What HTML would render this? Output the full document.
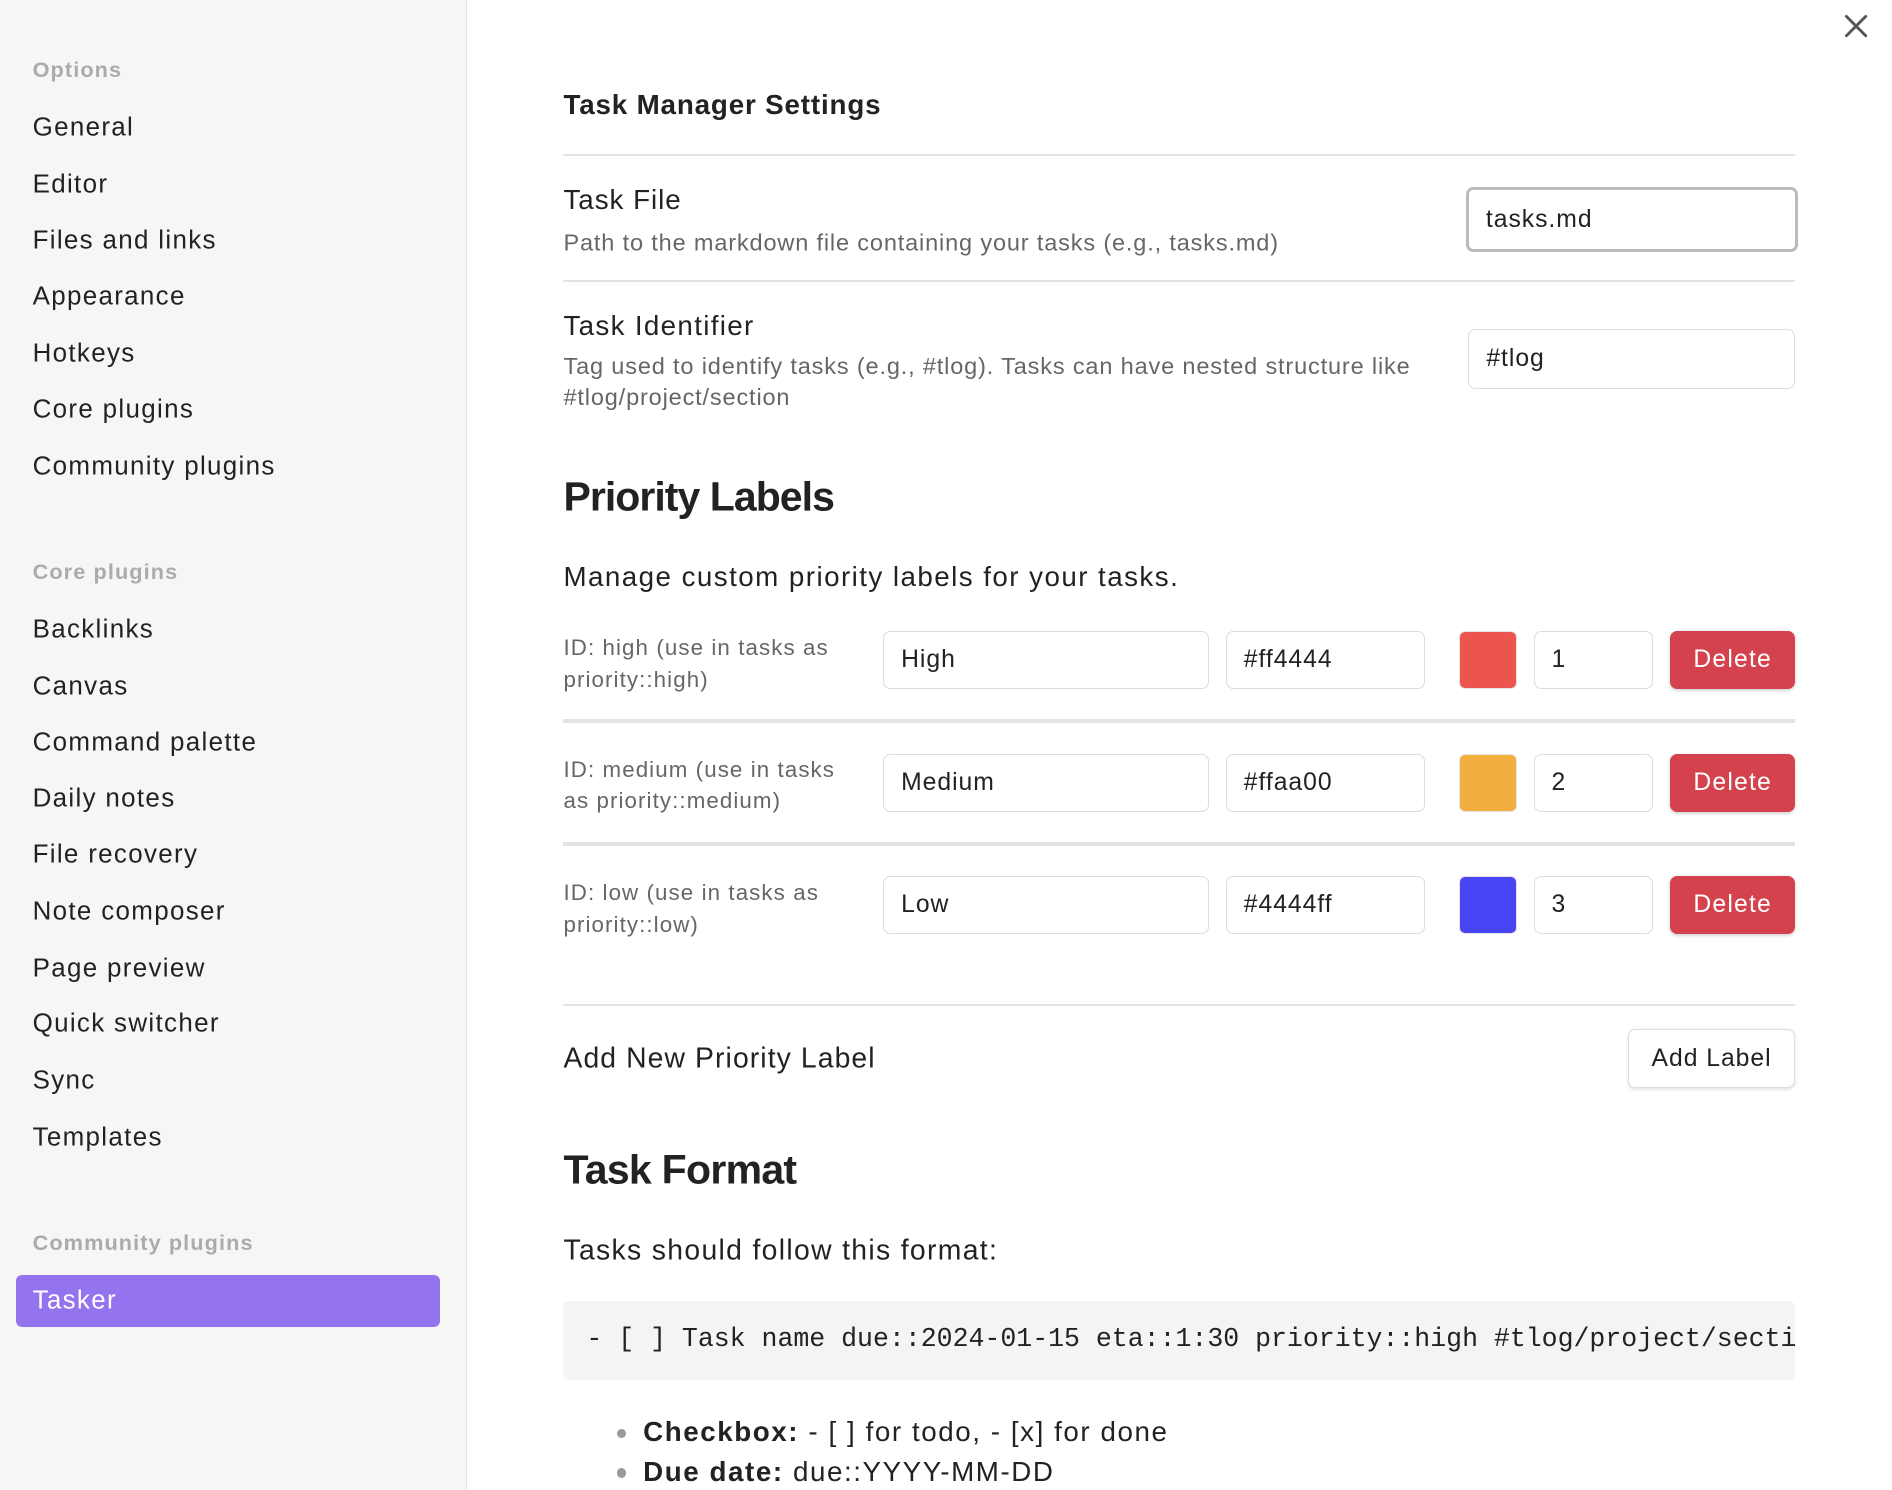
<!DOCTYPE html>
<html><head><meta charset="utf-8"><style>
html,body{margin:0;padding:0;background:#fff;overflow:hidden}
body{width:1568px;height:1235px;zoom:1.2066;position:relative;font-family:"Liberation Sans",sans-serif;color:#222}
.a{position:absolute;white-space:nowrap}
#side{position:absolute;left:0;top:0;width:386px;height:1235px;background:#f6f6f6;border-right:1px solid #e3e3e3}
.h{position:absolute;left:27px;font-size:18px;letter-spacing:0.9px;font-weight:bold;color:#ababab;transform:translateY(-50%)}
.it{position:absolute;left:27px;font-size:21.5px;letter-spacing:1.1px;color:#222;transform:translateY(-50%)}
.c{transform:translateY(-50%)}
.inp{position:absolute;border:1.5px solid #ddd;border-radius:6px;background:#fff;box-sizing:border-box;font-size:20.5px;letter-spacing:0.8px;padding-left:14px;display:flex;align-items:center}
.del{position:absolute;background:#d4424e;border-radius:6px;color:#fff;font-size:20.5px;letter-spacing:1px;display:flex;align-items:center;justify-content:center;box-shadow:0 1px 3px rgba(0,0,0,.2)}
.sw{position:absolute;border-radius:5px;border:1.5px solid #e4e4e4;box-sizing:border-box}
.line{position:absolute;left:467px;width:1021px;background:#e3e3e3}
.idt{position:absolute;left:467px;font-size:18.5px;letter-spacing:0.9px;color:#666;line-height:26px}
</style></head><body>
<div id="side">
<div class="h" style="top:58px">Options</div>
<div class="it" style="top:106px">General</div>
<div class="it" style="top:153px">Editor</div>
<div class="it" style="top:200px">Files and links</div>
<div class="it" style="top:246px">Appearance</div>
<div class="it" style="top:293px">Hotkeys</div>
<div class="it" style="top:340px">Core plugins</div>
<div class="it" style="top:387px">Community plugins</div>
<div class="h" style="top:474px">Core plugins</div>
<div class="it" style="top:522px">Backlinks</div>
<div class="it" style="top:569px">Canvas</div>
<div class="it" style="top:616px">Command palette</div>
<div class="it" style="top:662px">Daily notes</div>
<div class="it" style="top:709px">File recovery</div>
<div class="it" style="top:756px">Note composer</div>
<div class="it" style="top:803px">Page preview</div>
<div class="it" style="top:849px">Quick switcher</div>
<div class="it" style="top:896px">Sync</div>
<div class="it" style="top:943px">Templates</div>
<div class="h" style="top:1030px">Community plugins</div>
<div style="position:absolute;left:13px;top:1057px;width:352px;height:43px;background:#9373ee;border-radius:5px"></div>
<div class="it" style="top:1078px;color:#fff">Tasker</div>
</div>
<svg class="a" style="left:1528px;top:12px" width="20" height="20" viewBox="0 0 20 20"><path d="M2 2L18 18M18 2L2 18" stroke="#555" stroke-width="2.4" stroke-linecap="round"/></svg>

<div class="a c" style="left:467px;top:87px;font-size:23px;letter-spacing:0.7px;font-weight:bold">Task Manager Settings</div>
<div class="line" style="top:128px;height:1.5px"></div>
<div class="a c" style="left:467px;top:166px;font-size:23px;letter-spacing:0.8px">Task File</div>
<div class="a c" style="left:467px;top:201px;font-size:19.5px;letter-spacing:0.7px;color:#666">Path to the markdown file containing your tasks (e.g., tasks.md)</div>
<div class="inp" style="left:1215px;top:155px;width:275px;height:54px;border:3px solid #bbb;padding-left:14px">tasks.md</div>
<div class="line" style="top:232px;height:1.5px"></div>
<div class="a c" style="left:467px;top:270px;font-size:23px;letter-spacing:1.1px">Task Identifier</div>
<div class="idt" style="top:291px;font-size:19.5px;letter-spacing:0.7px">Tag used to identify tasks (e.g., #tlog). Tasks can have nested structure like<br>#tlog/project/section</div>
<div class="inp" style="left:1217px;top:273px;width:271px;height:49px">#tlog</div>

<div class="a c" style="left:467px;top:412px;font-size:34px;font-weight:bold;letter-spacing:-0.8px">Priority Labels</div>
<div class="a c" style="left:467px;top:478px;font-size:23px;letter-spacing:1.2px">Manage custom priority labels for your tasks.</div>

<div class="idt" style="top:524px">ID: high (use in tasks as<br>priority::high)</div>
<div class="inp" style="left:732px;top:523px;width:270px;height:48px">High</div>
<div class="inp" style="left:1016px;top:523px;width:165px;height:48px">#ff4444</div>
<div class="sw" style="left:1209px;top:523px;width:48px;height:48px;background:#ec544e"></div>
<div class="inp" style="left:1271px;top:523px;width:99px;height:48px">1</div>
<div class="del" style="left:1384px;top:523px;width:104px;height:48px">Delete</div>
<div class="line" style="top:596px;height:3px"></div>

<div class="idt" style="top:625px">ID: medium (use in tasks<br>as priority::medium)</div>
<div class="inp" style="left:732px;top:625px;width:270px;height:48px">Medium</div>
<div class="inp" style="left:1016px;top:625px;width:165px;height:48px">#ffaa00</div>
<div class="sw" style="left:1209px;top:625px;width:48px;height:48px;background:#f3ae40"></div>
<div class="inp" style="left:1271px;top:625px;width:99px;height:48px">2</div>
<div class="del" style="left:1384px;top:625px;width:104px;height:48px">Delete</div>
<div class="line" style="top:698px;height:3px"></div>

<div class="idt" style="top:727px">ID: low (use in tasks as<br>priority::low)</div>
<div class="inp" style="left:732px;top:726px;width:270px;height:48px">Low</div>
<div class="inp" style="left:1016px;top:726px;width:165px;height:48px">#4444ff</div>
<div class="sw" style="left:1209px;top:726px;width:48px;height:48px;background:#4644f3"></div>
<div class="inp" style="left:1271px;top:726px;width:99px;height:48px">3</div>
<div class="del" style="left:1384px;top:726px;width:104px;height:48px">Delete</div>

<div class="line" style="top:832px;height:1.5px"></div>
<div class="a c" style="left:467px;top:878px;font-size:23.5px;letter-spacing:0.9px">Add New Priority Label</div>
<div class="inp" style="left:1349px;top:853px;width:139px;height:49px;justify-content:center;padding:0;box-shadow:0 1px 3px rgba(0,0,0,.12)">Add Label</div>

<div class="a c" style="left:467px;top:970px;font-size:34px;font-weight:bold;letter-spacing:-0.6px">Task Format</div>
<div class="a c" style="left:467px;top:1037px;font-size:23.5px;letter-spacing:1.1px">Tasks should follow this format:</div>
<div style="position:absolute;left:467px;top:1078px;width:1021px;height:66px;background:#f4f4f4;border-radius:5px;overflow:hidden">
<div class="a" style="left:19px;top:19px;font-family:'Liberation Mono',monospace;font-size:22px;color:#222">- [ ] Task name due::2024-01-15 eta::1:30 priority::high #tlog/project/section</div>
</div>
<div class="a" style="left:511px;top:1184px;width:8px;height:8px;border-radius:50%;background:#999"></div>
<div class="a c" style="left:533px;top:1187px;font-size:23px;letter-spacing:1.3px"><b>Checkbox:</b> - [ ] for todo, - [x] for done</div>
<div class="a" style="left:511px;top:1217px;width:8px;height:8px;border-radius:50%;background:#999"></div>
<div class="a c" style="left:533px;top:1220px;font-size:23px;letter-spacing:1.3px"><b>Due date:</b> due::YYYY-MM-DD</div>
</body></html>
